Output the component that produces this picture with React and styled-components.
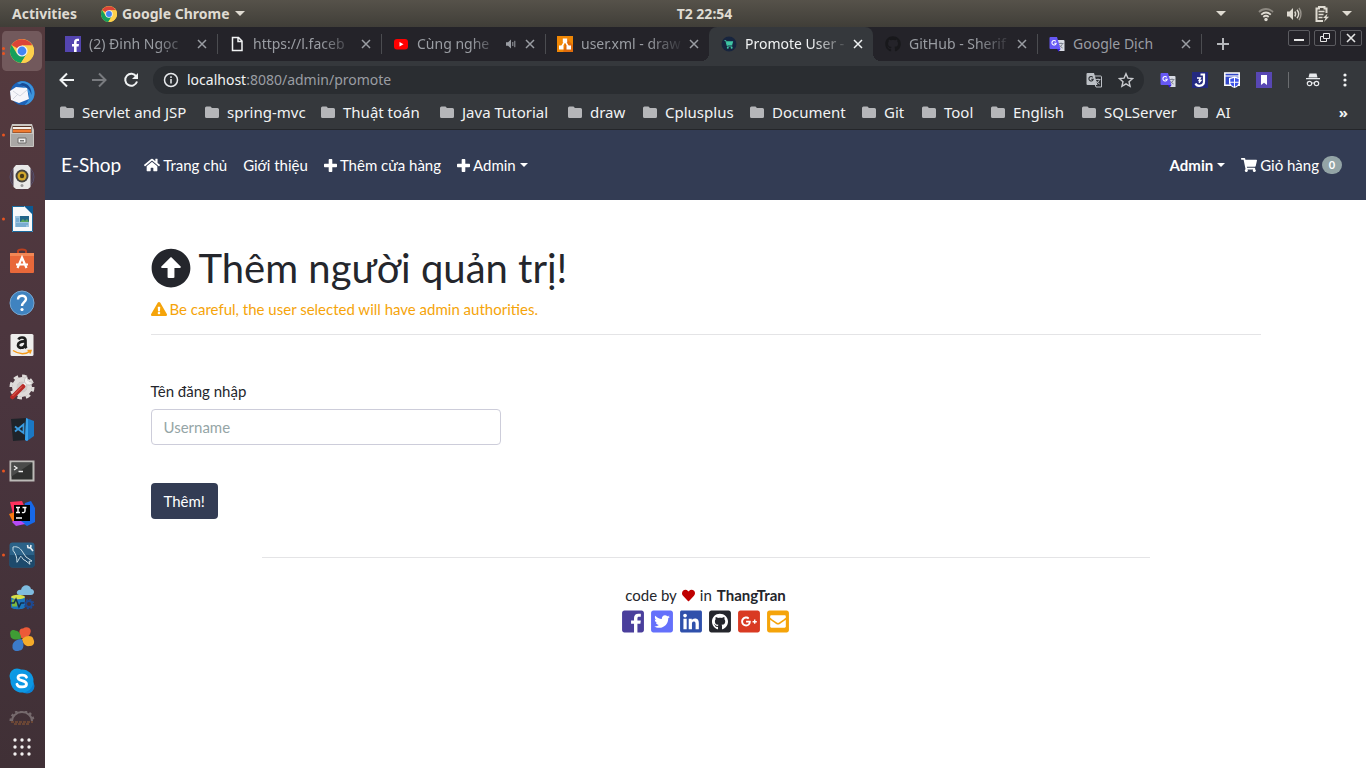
import React from "react";
import styled, { createGlobalStyle, css } from "styled-components";
import {
  FaHome, FaShoppingCart, FaArrowAltCircleUp, FaExclamationTriangle, FaHeart,
  FaTwitterSquare, FaLinkedin, FaGithubSquare, FaGithub, FaGooglePlusSquare, FaEnvelopeSquare,
} from "react-icons/fa";

const GlobalStyle = createGlobalStyle`
  *, *::before, *::after { box-sizing: border-box; }
  body { margin: 0; background: #fff; }
  button, input { font: inherit; margin: 0; }
  button { cursor: pointer; }
  svg { display: block; flex: none; }
`;

const uiFont = `"Noto Sans", "Open Sans", sans-serif`;
const pageFont = `Lato, "Liberation Sans", sans-serif`;

/* ---------- desktop ---------- */

const Desktop = styled.div`
  min-height: 100vh;
  display: flex;
  flex-direction: column;
  font-family: ${uiFont};
`;

const TopBar = styled.header`
  height: 27px;
  flex: none;
  display: grid;
  grid-template-columns: 1fr auto 1fr;
  align-items: center;
  padding: 0 14px 0 12px;
  background: linear-gradient(#56524a, #403e38);
  color: #dfdbd2;
  font-size: 14px;
  font-weight: 700;
  line-height: 20px;
`;

const TopGroup = styled.div`
  display: flex;
  align-items: center;
  justify-content: ${(p) => (p.$end ? "flex-end" : "flex-start")};
  gap: ${(p) => (p.$end ? "12px" : "24px")};
`;

const Clock = styled.time`
  margin-left: 45px;
`;

const PlainButton = styled.button`
  display: flex;
  align-items: center;
  justify-content: center;
  border: 0;
  padding: 0;
  background: none;
  color: inherit;
  white-space: nowrap;
`;

const AppMenu = styled(PlainButton)`
  gap: 5px;
`;

const Triangle = styled.span`
  border: 5px solid transparent;
  border-top-color: #dfdbd2;
  border-bottom: 0;
  margin-right: ${(p) => (p.$spaced ? "20px" : "0")};
`;

const Workspace = styled.div`
  flex: 1;
  display: flex;
`;

const Dock = styled.nav`
  width: 45px;
  flex: none;
  padding-top: 3px;
  display: flex;
  flex-direction: column;
  background: linear-gradient(#553a3e, #4a353e 50%, #403036);
`;

const DockItem = styled.button`
  position: relative;
  width: 43px;
  height: ${(p) => (p.$cut ? "24px" : "42px")};
  display: flex;
  align-items: ${(p) => (p.$cut ? "flex-start" : "center")};
  justify-content: center;
  padding: ${(p) => (p.$cut ? "8px 0 0" : "0")};
  border: 1px solid transparent;
  border-left-width: 2px;
  border-radius: 6px;
  overflow: hidden;
  background: ${(p) => (p.$active ? "#72595c" : "none")};
  background-clip: padding-box;
  opacity: ${(p) => (p.$cut ? 0.5 : 1)};
`;

const Dots = styled.span`
  position: absolute;
  left: 0;
  top: 50%;
  transform: translateY(-50%);
  display: flex;
  flex-direction: column;
  gap: 2px;
  &::before, &::after {
    content: "";
    width: 3px;
    height: 3px;
    border-radius: 50%;
    background: #e95420;
  }
  &::after { display: ${(p) => (p.$double ? "block" : "none")}; }
`;

const AppsButton = styled(DockItem)`
  margin-top: auto;
`;

/* ---------- browser ---------- */

const Browser = styled.main`
  flex: 1;
  min-width: 0;
  display: flex;
  flex-direction: column;
  background: #fff;
`;

const TabStrip = styled.div`
  height: 34px;
  flex: none;
  display: flex;
  padding: 0 4px 0 8px;
  background: #242329;
  color: #9a9da3;
  font-size: 14px;
  line-height: 20px;
`;

const Tab = styled.div`
  position: relative;
  width: 164px;
  flex: 0 1 auto;
  min-width: 0;
  display: flex;
  align-items: center;
  padding: 0 10px 0 12px;
  ${(p) => p.$divider && css`
    &::after {
      content: "";
      position: absolute;
      right: -1px;
      top: 7px;
      height: 20px;
      border-right: 1px solid #4b4c50;
    }
  `}
  ${(p) => p.$active && css`
    background: #35383c;
    color: #f1f3f4;
    border-radius: 8px 8px 0 0;
    &::before {
      content: "";
      position: absolute;
      left: -8px;
      right: -8px;
      bottom: 0;
      height: 8px;
      background:
        radial-gradient(circle at 0 0, transparent 8px, #35383c 8px) left / 8px 8px no-repeat,
        radial-gradient(circle at 8px 0, transparent 8px, #35383c 8px) right / 8px 8px no-repeat;
    }
  `}
`;

const TabTitle = styled.span`
  flex: 1;
  min-width: 0;
  margin: 0 4px 0 8px;
  overflow: hidden;
  white-space: nowrap;
  ${(p) => p.$fade && css`mask-image: linear-gradient(90deg, #000 65%, transparent);`}
`;

const TabSound = styled.span`
  margin-right: 8px;
`;

const NewTab = styled(PlainButton)`
  width: 44px;
`;

const WindowButtons = styled.div`
  margin-left: auto;
  padding-top: 3px;
  display: flex;
  align-items: flex-start;
  gap: 4px;
`;

const WindowButton = styled(PlainButton)`
  width: 22px;
  height: 16px;
  border: 1px solid #5b5b60;
  border-radius: 2px;
  color: #e6e6e6;
`;

const Toolbar = styled.div`
  height: 38px;
  flex: none;
  display: flex;
  align-items: center;
  padding: 0 13px 0 14px;
  background: #35383c;
  color: #f1f3f4;
`;

const NavButtons = styled.div`
  display: flex;
  gap: 16px;
  margin-right: 14px;
`;

const Omnibox = styled.div`
  flex: 1;
  height: 28px;
  display: flex;
  align-items: center;
  padding: 0 10px;
  border-radius: 14px;
  background: #2a2d31;
  font-size: 14px;
  line-height: 20px;
`;

const Host = styled.label`
  margin-left: 8px;
  color: #f1f3f4;
`;

const UrlInput = styled.input`
  flex: 1;
  min-width: 0;
  border: 0;
  outline: 0;
  padding: 0;
  background: none;
  color: #9a9da3;
`;

const OmniActions = styled.div`
  display: flex;
  gap: 16px;
`;

const Extensions = styled.div`
  display: flex;
  align-items: center;
  gap: 16px;
  margin-left: 16px;
`;

const ToolbarDivider = styled.span`
  height: 16px;
  border-left: 1px solid #6b6d70;
`;

const BookmarkBar = styled.nav`
  height: 31px;
  flex: none;
  display: flex;
  align-items: center;
  padding: 0 18px 5px 15px;
  border-bottom: 1px solid #24262a;
  background: #35383c;
  color: #f1f3f4;
  font-size: 15px;
  line-height: 20px;
`;

const Bookmark = styled.a`
  flex: 0 1 ${(p) => p.$width}px;
  display: flex;
  align-items: center;
  gap: 8px;
  color: inherit;
  text-decoration: none;
  white-space: nowrap;
`;

const MoreBookmarks = styled(PlainButton)`
  margin-left: auto;
  font-weight: 700;
`;

/* ---------- web page ---------- */

const Page = styled.div`
  flex: 1;
  color: #24262c;
  font-family: ${pageFont};
  font-size: 15px;
  line-height: 22px;
`;

const SiteNav = styled.nav`
  height: 70px;
  display: flex;
  align-items: center;
  padding: 0 16px;
  background: #333c54;
  color: #fff;
`;

const Brand = styled.a`
  margin-right: 15px;
  color: inherit;
  font-size: 19px;
  text-decoration: none;
`;

const NavLink = styled.a`
  display: flex;
  align-items: center;
  gap: 3px;
  padding: 8px;
  color: inherit;
  font-weight: ${(p) => (p.$strong ? 700 : 400)};
  text-decoration: none;
  white-space: nowrap;
`;

const NavSpacer = styled.span`
  flex: 1;
`;

const Caret = styled.span`
  margin-left: 1px;
  border: 4px solid transparent;
  border-top-color: currentColor;
  border-bottom: 0;
`;

const Badge = styled.span`
  min-width: 20px;
  height: 18px;
  padding: 0 6px;
  border-radius: 9px;
  background: #93a4a6;
  font-size: 11px;
  font-weight: 700;
  line-height: 18px;
  text-align: center;
`;

const Container = styled.div`
  max-width: 1140px;
  margin: 0 auto;
  padding: 44px 15px 0;
`;

const Title = styled.h1`
  display: flex;
  align-items: center;
  gap: 8px;
  margin: 0 0 6px;
  font-size: 40px;
  font-weight: 400;
  line-height: 48px;
`;

const Warning = styled.p`
  display: flex;
  align-items: center;
  gap: 3px;
  margin: 0;
  color: #f5a40a;
`;

const Rule = styled.hr`
  margin: 14px 0 0;
  border: 0;
  border-top: 1px solid #e4e4e6;
`;

const Form = styled.form`
  display: flex;
  flex-direction: column;
  align-items: flex-start;
  padding: 45px 0 38px;
`;

const FieldLabel = styled.label`
  margin-bottom: 7px;
`;

const TextField = styled.input`
  width: 350px;
  max-width: 100%;
  height: 36px;
  margin-bottom: 38px;
  padding: 0 12px;
  border: 1px solid #cdcdda;
  border-radius: 4px;
  background: #fff;
  color: inherit;
  &::placeholder { color: #95a5a6; opacity: 1; }
`;

const Submit = styled.button`
  height: 36px;
  padding: 0 13px;
  border: 0;
  border-radius: 4px;
  background: #333c54;
  color: #fff;
`;

const Footer = styled.footer`
  width: 80%;
  margin: 0 auto;
  display: flex;
  flex-direction: column;
  align-items: center;
  border-top: 1px solid #e4e4e6;
  padding: 26px 0 16px;
`;

const Credit = styled.p`
  display: flex;
  align-items: center;
  gap: 5px;
  margin: 0 0 3px;
`;

const Socials = styled.div`
  display: flex;
  gap: 7px;
`;

const Social = styled.a`
  color: ${(p) => p.$color};
  svg { width: 22px; height: 25px; }
`;

/* ---------- drawings ---------- */

const Svg = ({ s = 24, vb = 24, children, ...rest }) => (
  <svg width={s} height={s} viewBox={`0 0 ${vb} ${vb}`} fill="none" aria-hidden="true" {...rest}>{children}</svg>
);

const Chrome = ({ s }) => (
  <Svg s={s}>
    <circle cx="12" cy="12" r="12" fill="#fdd04c" />
    <path d="M12 12L1.6 6A12 12 0 0 1 22.4 6.5H12z" fill="#dc4437" />
    <path d="M1.6 6A12 12 0 0 0 11 24l5.800-9.300L12 12 7 14.700z" fill="#159f5c" />
    <path d="M12 6.500h10.700A12 12 0 0 1 11 24l5.800-9.300z" fill="#fdd04c" />
    <circle cx="12" cy="12" r="5.600" fill="#f3f3f3" />
    <circle cx="12" cy="12" r="4.400" fill="#4285f4" />
  </Svg>
);

const Plus = () => (
  <svg width="13" height="15" viewBox="0 0 448 512" fill="currentColor" aria-hidden="true">
    <path d="M448 294.200v-76.400c0-13.300-10.700-24-24-24H286.200V56c0-13.300-10.700-24-24-24h-76.400c-13.300 0-24 10.700-24 24v137.800H24c-13.300 0-24 10.700-24 24v76.400c0 13.300 10.700 24 24 24h137.800V456c0 13.300 10.700 24 24 24h76.400c13.300 0 24-10.700 24-24V318.200H424c13.300 0 24-10.700 24-24z" />
  </svg>
);

const FacebookOld = () => (
  <svg viewBox="0 0 448 512" fill="currentColor" aria-hidden="true">
    <path d="M448 80v352c0 26.500-21.500 48-48 48h-85.300V302.800h60.600l8.700-67.600h-69.300V192c0-19.600 5.400-32.900 33.500-32.900H384V98.700c-6.200-.8-27.400-2.700-52.200-2.700-51.600 0-87 31.500-87 89.400v49.900H184v67.600h60.900V480H48c-26.500 0-48-21.500-48-48V80c0-26.500 21.500-48 48-48h352c26.500 0 48 21.500 48 48z" />
  </svg>
);

const FacebookTab = () => (
  <Svg s={16} vb={16}>
    <path fill="#5445b0" d="M0 0h16v16H0z" />
    <path fill="#fff" d="M9 16v-5.500H7V8h2V6.200C9 4 10.200 2.800 12.200 2.800H14V5h-1.300C11.900 5 11.600 5.400 11.600 6.200V8H14l-.4 2.500h-2V16z" />
  </Svg>
);
const FileTab = () => (
  <Svg s={16} vb={16} stroke="#f1f3f4" strokeWidth="1.500"><path d="M3.500 1.500h6l3.500 3.500v9.500H3.500zM9 1.500V5.500h4" /></Svg>
);
const YoutubeTab = () => (
  <Svg s={16} vb={16}><rect x="1" y="3" width="14" height="10.500" rx="3" fill="#f00" /><path d="M6.500 6v4.500l4-2.200z" fill="#fff" /></Svg>
);
const DrawTab = () => (
  <Svg s={16} vb={16}>
    <path fill="#f08705" d="M0 0h16v16H0z" /><path fill="#df6c0c" d="M10 3l6 6v7H6z" />
    <path d="M8 5L4.500 11M8 5l3.500 6" stroke="#fff" strokeWidth="1.500" />
    <path fill="#fff" d="M5.800 2.500h4.400v4H5.800zM2 9.500h4.500v4H2zM9.500 9.500H14v4H9.500z" />
  </Svg>
);
const ShopTab = () => (
  <Svg s={16} vb={16}>
    <circle cx="8" cy="8" r="7.500" fill="#17253f" />
    <path d="M3.500 4.500h1.300l1.500 5.500h5" stroke="#3fc6a4" /><path d="M5.200 5.200h7l-1 3.800H6.200z" fill="#3fc6a4" />
    <circle cx="6.800" cy="11.700" r="1" fill="#3fc6a4" /><circle cx="10.600" cy="11.700" r="1" fill="#3fc6a4" />
  </Svg>
);
const Translate = ({ mono }) => (
  <Svg s={16} vb={16}>
    <path d="M6 4h8.500a1 1 0 0 1 1 1v10H10z" fill={mono ? "none" : "#d9dce4"} stroke={mono ? "#bdc1c6" : "none"} />
    <path d="M9.500 7.500h5M12 6.500v1M13.500 7.500c-.5 2-2 3.500-3.500 4.500M10.500 9c1 2 2 2.500 3.200 3" stroke={mono ? "#bdc1c6" : "#7a7f8c"} strokeWidth=".9" />
    <path d="M1.500 1H8l3.500 12h-10a1 1 0 0 1-1-1V2a1 1 0 0 1 1-1z" fill={mono ? "#bdc1c6" : "#6658f5"} />
    {!mono && <path d="M8 13h3.500L9.500 15.800z" fill="#3318d8" />}
    <path d="M6.800 5.300a2.200 2.200 0 1 0 .5 1.900H5.200" stroke={mono ? "#2a2d31" : "#fff"} strokeWidth="1.100" />
  </Svg>
);
const Cross = () => <Svg s={10} vb={10} stroke="currentColor" strokeWidth="1.500"><path d="M1 1l8 8M9 1L1 9" /></Svg>;
const Speaker = () => (
  <Svg s={12} vb={12} fill="currentColor"><path d="M1 4.200h2L6 1.500v9L3 7.800H1z" /><path d="M7.800 4v4M9.800 2.800v6.400" stroke="currentColor" /></Svg>
);
const Folder = () => (
  <Svg s={14} vb={14}><path d="M1.500 1.500h4L7 3h5.500A1.500 1.500 0 0 1 14 4.500v7a1.500 1.500 0 0 1-1.500 1.500h-11A1.500 1.500 0 0 1 0 11.500V3a1.500 1.500 0 0 1 1.500-1.500z" fill="#b5b6b9" /></Svg>
);

/* dock icons, 26px square */
const D = ({ children }) => <Svg s={26} vb={26}>{children}</Svg>;

const Thunderbird = () => (
  <D>
    <circle cx="13.500" cy="13" r="12" fill="#1c62b8" />
    <path d="M8 3C15-2 26 4 25.500 14c-.3 6-5 10.500-10 11 5-4 6-9 3-14C16 7 12 5 8 3z" fill="#3b93dc" />
    <path d="M13 3c6 0 10 5 9.500 12C21 9 17 6 10 5z" fill="#174a96" />
    <path d="M1 11l6-4 11 1 2 11-10 4-8-3z" fill="#f6f6fa" />
    <path d="M4 11l7 5 7-6M4 19l5-5" stroke="#c3c8d6" strokeWidth=".7" />
  </D>
);
const Files = () => (
  <D>
    <path d="M3 2h20l2 6v16a1 1 0 0 1-1 1H2a1 1 0 0 1-1-1V8z" fill="#c9c6c2" />
    <path d="M3.500 4h19v7h-19z" fill="#583426" /><path d="M4 5h18v2H4z" fill="#f4efe9" /><path d="M4 7.500h18v3H4z" fill="#ee7a31" />
    <path d="M2 12h22v12H2z" fill="#a9a7a5" /><path d="M9 16h8v5H9z" fill="#eee" stroke="#6e6c6b" /><path d="M11 18h4v1.500h-4z" fill="#777" />
  </D>
);
const Rhythmbox = () => (
  <D>
    <circle cx="13" cy="13" r="12" stroke="#55506e" /><circle cx="13" cy="13" r="10.500" stroke="#4d4560" />
    <path d="M7 1h12l2.500 3v19l-2.500 2H7l-2.500-2V4z" fill="#e9e9e8" />
    <circle cx="13" cy="12" r="6.500" fill="#464540" /><circle cx="13" cy="12" r="4.500" fill="#d3a92c" /><circle cx="13" cy="12" r="2.200" fill="#4a3c16" />
    <circle cx="13" cy="21.500" r="1.500" fill="#999" />
  </D>
);
const Writer = () => (
  <D>
    <path d="M3 0h13l8 8v18H3z" fill="#f7f9fa" /><path d="M3 .5h12M3.500 0v25.500h20V8" stroke="#1b6a9d" />
    <path d="M15 0h9v9z" fill="#0d5a92" /><path d="M6 10h14v11H6z" fill="#9bc3df" /><path d="M11 10h9v6h-9z" fill="#1f6488" />
    <path d="M11 16l3-3 2 2 2-2 2 3z" fill="#58a65b" /><path d="M7 13h3M7 15h3M7 18h12M7 20h10" stroke="#5795c1" />
  </D>
);
const Software = () => (
  <D>
    <path d="M9 6V3c0-2 8-2 8 0v3" stroke="#bb401f" strokeWidth="2" /><path d="M1 5h24v19a1 1 0 0 1-1 1H2a1 1 0 0 1-1-1z" fill="#e8683a" />
    <path d="M1 5h24v3H1z" fill="#f28755" /><path d="M8.500 20L13 9.500 17.500 20M7 16.500h12" stroke="#fff" strokeWidth="2.200" />
  </D>
);
const Help = () => (
  <D>
    <circle cx="13" cy="13" r="12" fill="#3f83c0" stroke="#78a7d0" />
    <path d="M9 9.500c0-5 8-5 8-.5 0 3-4 3.500-4 7" stroke="#fff" strokeWidth="2.400" /><circle cx="13" cy="19.500" r="1.600" fill="#fff" />
  </D>
);
const Amazon = () => (
  <D>
    <rect x="1.500" y="2" width="23" height="22" rx="1.500" fill="#eeedec" />
    <path d="M9.500 7.500c1-2.800 7-2.800 7 .8V14c0 1 .4 1.500 1 2.200M16 9.500c-4-.3-7 .9-7 3.700 0 3.500 6 3.500 7-.4" stroke="#1d1d1d" strokeWidth="2.700" />
    <path d="M4 18.500c6 4 12 4 17 .8M18.500 18.500h3.500l-1 3" stroke="#f49b1b" strokeWidth="1.500" />
  </D>
);
const Tweaks = () => (
  <D>
    <circle cx="13" cy="13" r="7.500" stroke="#dedbd9" strokeWidth="5" /><circle cx="13" cy="13" r="11" stroke="#dedbd9" strokeWidth="3" strokeDasharray="4.600 4" />
    <circle cx="13" cy="13" r="5.500" fill="#cfcbc9" />
    <path d="M14 12l6-6" stroke="#f2f0ef" strokeWidth="3" /><path d="M18 2.500a4.500 4.500 0 1 0 6 6l-4-1-1-1z" fill="#f2f0ef" stroke="#b5b1b0" strokeWidth=".7" />
    <path d="M3.500 23L14 12.500" stroke="#b92a27" strokeWidth="4.500" strokeLinecap="round" /><path d="M3.500 22L13 12.500" stroke="#e06a5c" />
  </D>
);
const Code = () => (
  <D>
    <path d="M2 3l16-1v22L4 25z" fill="#1e2329" /><path d="M17 2l8 3v15l-7 5-2-1z" fill="#1b78c4" /><path d="M17 2l2 1v21l-1 1-2-1z" fill="#38a1e8" />
    <path d="M14.500 8.500l-5.500 4.500 5.500 4zM9 13l-3-2.500M9 13l-3 2.500" stroke="#3a9be0" strokeWidth="1.800" />
  </D>
);
const Terminal = () => (
  <D>
    <rect x="1.500" y="3.500" width="23" height="19" fill="#2f302f" stroke="#bcbab7" strokeWidth="2" /><path d="M2.500 4.500h21l-21 14z" fill="#4a4b4a" />
    <path d="M5 8l3 2-3 2M9.500 13.500H14" stroke="#eee" strokeWidth="1.300" />
  </D>
);
const IntelliJ = () => (
  <D>
    <path d="M1 2l12-1 4 9-12 8z" fill="#fe315d" /><path d="M0 14l6-2 2 9-4 1z" fill="#f97a12" /><path d="M16 3l6-2 4 7v14l-8 4-6-4z" fill="#1768e8" />
    <path d="M3 22l5-4 8 6-9 2z" fill="#b74af7" /><path d="M5 5h16v16H5z" fill="#000" />
    <path d="M7 7.500h4M9 7.500v5M7 12.500h4M13.500 7.500h4M16 7.500v3.500c0 1.500-1.500 2-3 1.300M7 18h6" stroke="#fff" strokeWidth="1.400" />
  </D>
);
const Workbench = () => (
  <D>
    <rect x="0.500" y="0.500" width="25" height="25" rx="3" fill="#2b6288" /><path d="M.5 13h25v10a2.500 2.500 0 0 1-2.500 2.500H3A2.500 2.500 0 0 1 .5 23z" fill="#1d4a6c" />
    <path d="M4 5c4-1 7 1 9 4l4 6 6 4-3 .3 1 3-5-4c-2 0-2-2-4-4-2 1-2 4-4 6 0-5-1-8-4-12z" stroke="#c9dde6" strokeWidth="1" />
    <path d="M18.500 3l.5 2.500 2.500.5L24 9M21.500 6l.5-3" stroke="#e7eef2" strokeWidth="1.600" />
  </D>
);
const DataStudio = () => (
  <D>
    <path d="M2 13h14v10c0 3-14 3-14 0z" fill="#1c76bd" /><ellipse cx="9" cy="13" rx="7" ry="2.200" fill="#d6df49" /><path d="M3 15.500h5v7H3z" fill="#7eb63f" />
    <path d="M10 11c-4-1-2-6 2-5 1-6 9-6 10-1 4 0 4 6 0 6z" fill="#7fbce0" />
    <path d="M1 19h4l2-4 3 8 2-4h3" stroke="#14304d" strokeWidth="1.500" /><circle cx="20" cy="20" r="3" stroke="#1e4a92" strokeWidth="2" /><circle cx="20" cy="20" r="4.500" stroke="#1e4a92" strokeWidth="1.500" strokeDasharray="2 1.500" />
  </D>
);
const Clover = () => (
  <D>
    <path d="M12.500 12C9 7 10 2 14 2.500c4-3 9 0 7.500 4-1 4.500-5 5.500-9 5.500z" fill="#ec5a38" /><path d="M12 12.500C7 15 1 13 1.500 9 0 5 4 3 6 4.500c4 0 6 4 6 8z" fill="#3f9c35" />
    <path d="M13 13c4-4 11-4 11.500.5 2 4-1 7-4 6.500-4 1-7-3-7.500-7z" fill="#f5ab2a" /><path d="M12.500 13c3.500 5 2 11.500-2 11.500-4 1.500-7.500-.5-7-4C3 16 8 13 12.500 13z" fill="#3c7bc9" />
  </D>
);
const Skype = () => (
  <D>
    <circle cx="8" cy="8" r="7.500" fill="#0d9be4" /><circle cx="18" cy="18" r="7.500" fill="#0b82d4" /><circle cx="13" cy="13" r="11.500" fill="#0c98e4" />
    <path d="M17.500 9.300c-1-2.800-8.500-3-8.500.5 0 3.700 8.500 2 8.500 6.200 0 4-8.500 3.800-9.500.3" stroke="#fff" strokeWidth="2.800" strokeLinecap="round" />
  </D>
);
const JavaCC = () => (
  <D>
    <path d="M3 10a10 9 0 0 1 20 0" stroke="#aaa4a4" strokeWidth="2" /><path d="M1.500 10a11.500 10.500 0 0 1 23 0" stroke="#aaa4a4" strokeWidth="2" strokeDasharray="2.500 2.500" />
    <path d="M2 11h22M5 13h16" stroke="#b06a35" strokeWidth="1.500" strokeDasharray="3 1" />
  </D>
);
const Grid = () => (
  <D>{[6, 13, 20].map((y) => [6, 13, 20].map((x) => <circle key={`${x}-${y}`} cx={x} cy={y} r="1.700" fill="#f3f1f1" />))}</D>
);

const BackArrow = () => <Svg s={16} vb={16} stroke="currentColor" strokeWidth="2"><path d="M15 8H2M8 1.500L1.500 8 8 14.500" /></Svg>;
const ForwardArrow = () => <Svg s={16} vb={16} stroke="#797b7f" strokeWidth="2"><path d="M1 8h13M8 1.500L14.500 8 8 14.500" /></Svg>;
const Reload = () => (
  <Svg s={16} vb={16}><path d="M13.300 4.500A6 6 0 1 0 14 9.500" stroke="currentColor" strokeWidth="2" /><path d="M15 1v6H9z" fill="currentColor" /></Svg>
);
const Info = () => (
  <Svg s={16} vb={16} stroke="#e8eaed" strokeWidth="1.500"><circle cx="8" cy="8" r="6.500" /><path d="M8 7v4.500M8 4.300v1.600" /></Svg>
);
const Star = () => (
  <Svg s={16} vb={16} stroke="#c9cbcf" strokeWidth="1.400"><path d="M8 1.700l1.900 4.400 4.800.4L11 9.700l1.100 4.700L8 11.900l-4.100 2.500L5 9.700 1.300 6.500l4.800-.4z" /></Svg>
);
const ExtJ = () => (
  <Svg s={16} vb={16}><path fill="#242a80" d="M0 0h16v16H0z" /><path d="M8.500 2.500H12V9.500c0 5-7 5.500-8.500 2" stroke="#fff" strokeWidth="2.200" /><path d="M5 6h3.500L7 8.500h2l-2 2.300" stroke="#fff" strokeWidth="1.300" /></Svg>
);
const ExtShield = () => (
  <Svg s={16} vb={16}>
    <path d="M.8 1h14.400v12.200H.8z" fill="#3146c7" stroke="#fff" strokeWidth="1.500" /><path d="M1 4h14" stroke="#fff" strokeWidth="1.200" />
    <path d="M10.500 4.500L16 6v4.500c0 3-3 4.500-5.500 5.500C8 15 5 13.500 5 10.500V6z" fill="#fff" />
    <path d="M6.300 7l3.700-1v3.700H6.300zM11 6l3.700 1v2.700H11zM6.300 10.700H10v4c-2-.8-3.500-2-3.700-4zM11 10.700h3.700c-.2 2-1.700 3.200-3.700 4z" fill="#3c52e8" />
  </Svg>
);
const ExtBookmark = () => <Svg s={16} vb={16}><path fill="#5847b4" d="M0 0h16v16H0z" /><path d="M5 3h6v10l-3-2.300L5 13z" fill="#fff" /></Svg>;
const Incognito = () => (
  <Svg s={16} vb={16}>
    <path d="M4.500 1.500h7l1 4h-9zM1 6h14v1.300H1z" fill="#e8eaed" />
    <circle cx="4.500" cy="11.500" r="2.200" stroke="#e8eaed" strokeWidth="1.200" /><circle cx="11.500" cy="11.500" r="2.200" stroke="#e8eaed" strokeWidth="1.200" /><path d="M6.700 11h2.600" stroke="#e8eaed" />
  </Svg>
);
const Kebab = () => <Svg s={16} vb={16} fill="#f1f3f4"><circle cx="8" cy="3" r="1.600" /><circle cx="8" cy="8" r="1.600" /><circle cx="8" cy="13" r="1.600" /></Svg>;

const Wifi = () => (
  <Svg s={16} vb={16} strokeWidth="1.800">
    <path d="M1 6c4-4 10-4 14 0" stroke="#8c8880" /><path d="M3.200 8.600c3-2.700 6.600-2.700 9.600 0M5.300 11c1.700-1.500 3.700-1.500 5.400 0" stroke="#dfdbd2" /><circle cx="8" cy="13.500" r="1.700" fill="#dfdbd2" />
  </Svg>
);
const Volume = () => (
  <Svg s={16} vb={16}>
    <path d="M1 5.500h2.500L7 2v12l-3.500-3.500H1z" fill="#dfdbd2" /><path d="M8.800 5.500c1 1.500 1 3.500 0 5M11 3.700c2 2.500 2 6 0 8.600" stroke="#dfdbd2" strokeWidth="1.400" /><path d="M13 2c2.600 3.500 2.600 8.500 0 12" stroke="#98948c" strokeWidth="1.400" />
  </Svg>
);
const Battery = () => (
  <Svg s={16} vb={16}>
    <path d="M12.500 7V2.500h-2V1H5v1.500H2.500v12.500H9" stroke="#dfdbd2" strokeWidth="2" /><path d="M4.500 5.500h6M4.500 8.500h5M4.500 11.500h4" stroke="#dfdbd2" strokeWidth="1.600" /><path d="M13.500 7.500L9 12h2.500l-1.500 4 5-5.200h-2.500z" fill="#dfdbd2" />
  </Svg>
);

/* ---------- data ---------- */

const dockApps = [
  { name: "Google Chrome", icon: <Chrome s={24} />, dots: 2, active: true },
  { name: "Thunderbird", icon: <Thunderbird /> },
  { name: "Files", icon: <Files />, dots: 1 },
  { name: "Rhythmbox", icon: <Rhythmbox /> },
  { name: "Writer", icon: <Writer />, dots: 1 },
  { name: "Software", icon: <Software /> },
  { name: "Help", icon: <Help /> },
  { name: "Amazon", icon: <Amazon /> },
  { name: "Tweaks", icon: <Tweaks /> },
  { name: "Code", icon: <Code /> },
  { name: "Terminal", icon: <Terminal />, dots: 1 },
  { name: "IntelliJ", icon: <IntelliJ /> },
  { name: "Workbench", icon: <Workbench />, dots: 1 },
  { name: "Data Studio", icon: <DataStudio /> },
  { name: "Clover", icon: <Clover /> },
  { name: "Skype", icon: <Skype /> },
  { name: "JavaCC", icon: <JavaCC />, cut: true },
];

const tabs = [
  { title: "(2) Đinh Ngọc", icon: <FacebookTab />, divider: true, fade: true },
  { title: "https://l.faceb", icon: <FileTab />, divider: true, fade: true },
  { title: "Cùng nghe", icon: <YoutubeTab />, divider: true, fade: true, sound: true },
  { title: "user.xml - draw", icon: <DrawTab />, fade: true },
  { title: "Promote User -", icon: <ShopTab />, active: true, fade: true },
  { title: "GitHub - Sherif", icon: <FaGithub size={16} color="#18181b" />, divider: true, fade: true },
  { title: "Google Dịch", icon: <Translate />, divider: true },
];

const bookmarks = [
  ["Servlet and JSP", 145], ["spring-mvc", 116], ["Thuật toán", 119], ["Java Tutorial", 128],
  ["draw", 75], ["Cplusplus", 107], ["Document", 112], ["Git", 60], ["Tool", 69],
  ["English", 91], ["SQLServer", 112], ["AI", 60],
];

const socials = [
  { name: "Facebook", color: "#4a3f9c", icon: <FacebookOld /> },
  { name: "Twitter", color: "#6470fb", icon: <FaTwitterSquare /> },
  { name: "LinkedIn", color: "#2f50ab", icon: <FaLinkedin /> },
  { name: "GitHub", color: "#24262c", icon: <FaGithubSquare /> },
  { name: "Google Plus", color: "#d93a22", icon: <FaGooglePlusSquare /> },
  { name: "Email", color: "#f5a40a", icon: <FaEnvelopeSquare /> },
];

export default function App() {
  return (
    <Desktop>
      <GlobalStyle />
      <TopBar>
        <TopGroup>
          <PlainButton>Activities</PlainButton>
          <AppMenu><Chrome s={16} />Google Chrome<Triangle /></AppMenu>
        </TopGroup>
        <Clock>T2 22:54</Clock>
        <TopGroup $end>
          <Triangle $spaced />
          <Wifi /><Volume /><Battery />
          <Triangle />
        </TopGroup>
      </TopBar>

      <Workspace>
        <Dock aria-label="Dock">
          {dockApps.map((a) => (
            <DockItem key={a.name} aria-label={a.name} $active={a.active} $cut={a.cut}>
              {a.dots && <Dots $double={a.dots === 2} />}
              {a.icon}
            </DockItem>
          ))}
          <AppsButton aria-label="Show applications"><Grid /></AppsButton>
        </Dock>

        <Browser>
          <TabStrip>
            {tabs.map((t) => (
              <Tab key={t.title} $active={t.active} $divider={t.divider}>
                {t.icon}
                <TabTitle $fade={t.fade}>{t.title}</TabTitle>
                {t.sound && <TabSound><Speaker /></TabSound>}
                <PlainButton aria-label="Close tab"><Cross /></PlainButton>
              </Tab>
            ))}
            <NewTab aria-label="New tab">
              <Svg s={12} vb={12} stroke="#b5b7bb" strokeWidth="2"><path d="M6 0v12M0 6h12" /></Svg>
            </NewTab>
            <WindowButtons>
              <WindowButton aria-label="Minimize"><Svg s={12} vb={12} stroke="currentColor" strokeWidth="2"><path d="M1 8h10" /></Svg></WindowButton>
              <WindowButton aria-label="Restore"><Svg s={12} vb={12} stroke="currentColor"><path d="M4.500 1.500h6v5h-6zM4.500 4.500h-3v5h6v-3" /></Svg></WindowButton>
              <WindowButton aria-label="Close"><Svg s={12} vb={12} stroke="currentColor" strokeWidth="1.600"><path d="M2 2l8 8M10 2l-8 8" /></Svg></WindowButton>
            </WindowButtons>
          </TabStrip>

          <Toolbar>
            <NavButtons>
              <PlainButton aria-label="Back"><BackArrow /></PlainButton>
              <PlainButton aria-label="Forward"><ForwardArrow /></PlainButton>
              <PlainButton aria-label="Reload"><Reload /></PlainButton>
            </NavButtons>
            <Omnibox>
              <Info />
              <Host htmlFor="url">localhost</Host>
              <UrlInput id="url" defaultValue=":8080/admin/promote" />
              <OmniActions>
                <PlainButton aria-label="Translate"><Translate mono /></PlainButton>
                <PlainButton aria-label="Bookmark"><Star /></PlainButton>
              </OmniActions>
            </Omnibox>
            <Extensions>
              <Translate /><ExtJ /><ExtShield /><ExtBookmark />
              <ToolbarDivider />
              <Incognito />
              <PlainButton aria-label="Menu"><Kebab /></PlainButton>
            </Extensions>
          </Toolbar>

          <BookmarkBar aria-label="Bookmarks">
            {bookmarks.map(([name, width]) => (
              <Bookmark key={name} href="#" $width={width}><Folder />{name}</Bookmark>
            ))}
            <MoreBookmarks aria-label="More bookmarks">»</MoreBookmarks>
          </BookmarkBar>

          <Page>
            <SiteNav>
              <Brand href="#">E-Shop</Brand>
              <NavLink href="#"><FaHome size={16} />Trang chủ</NavLink>
              <NavLink href="#">Giới thiệu</NavLink>
              <NavLink href="#"><Plus />Thêm cửa hàng</NavLink>
              <NavLink href="#"><Plus />Admin<Caret /></NavLink>
              <NavSpacer />
              <NavLink href="#" $strong>Admin<Caret /></NavLink>
              <NavLink href="#"><FaShoppingCart size={16} />Giỏ hàng<Badge>0</Badge></NavLink>
            </SiteNav>

            <Container>
              <Title><FaArrowAltCircleUp size={40} />Thêm người quản trị!</Title>
              <Warning><FaExclamationTriangle size={16} />Be careful, the user selected will have admin authorities.</Warning>
              <Rule />
              <Form>
                <FieldLabel htmlFor="username">Tên đăng nhập</FieldLabel>
                <TextField id="username" placeholder="Username" />
                <Submit type="button">Thêm!</Submit>
              </Form>
              <Footer>
                <Credit>code by <FaHeart size={13} color="#bf0000" /> in <b>ThangTran</b></Credit>
                <Socials>
                  {socials.map((s) => (
                    <Social key={s.name} href="#" aria-label={s.name} $color={s.color}>{s.icon}</Social>
                  ))}
                </Socials>
              </Footer>
            </Container>
          </Page>
        </Browser>
      </Workspace>
    </Desktop>
  );
}
